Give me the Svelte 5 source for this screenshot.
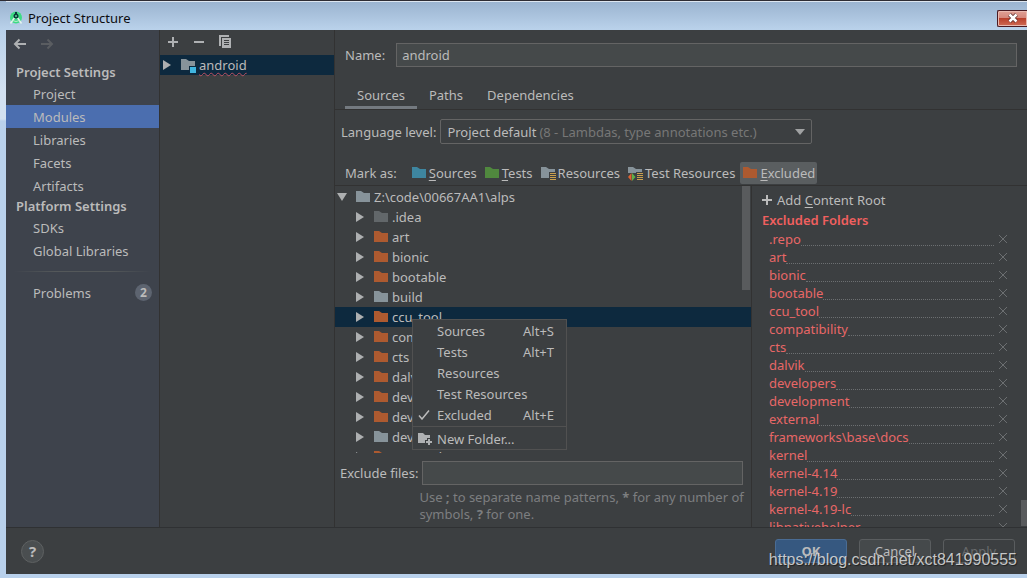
<script lang="ts">
	type Mark = 'source' | 'test' | 'plain' | 'excluded' | 'hidden';

	const projectItems = ['Project', 'Modules', 'Libraries', 'Facets', 'Artifacts'];
	const platformItems = ['SDKs', 'Global Libraries'];
	const tabs = ['Sources', 'Paths', 'Dependencies'];

	const marks = [
		{ key: 'S', rest: 'ources', icon: 'source' },
		{ key: 'T', rest: 'ests', icon: 'test' },
		{ key: '', rest: 'Resources', icon: 'plain', badge: 'resources' },
		{ key: '', rest: 'Test Resources', icon: 'plain', badge: 'test-resources' },
		{ key: 'E', rest: 'xcluded', icon: 'excluded' }
	];

	const folders: { name: string; mark: Mark }[] = [
		{ name: '.idea', mark: 'hidden' },
		{ name: 'art', mark: 'excluded' },
		{ name: 'bionic', mark: 'excluded' },
		{ name: 'bootable', mark: 'excluded' },
		{ name: 'build', mark: 'plain' },
		{ name: 'ccu_tool', mark: 'excluded' },
		{ name: 'compatibility', mark: 'excluded' },
		{ name: 'cts', mark: 'excluded' },
		{ name: 'dalvik', mark: 'excluded' },
		{ name: 'developers', mark: 'excluded' },
		{ name: 'development', mark: 'excluded' },
		{ name: 'device', mark: 'plain' },
		{ name: 'external', mark: 'excluded' }
	];

	const menu = [
		{ label: 'Sources', shortcut: 'Alt+S' },
		{ label: 'Tests', shortcut: 'Alt+T' },
		{ label: 'Resources', shortcut: '' },
		{ label: 'Test Resources', shortcut: '' },
		{ label: 'Excluded', shortcut: 'Alt+E' }
	];

	let section = $state('Modules');
	let tab = $state('Sources');
	let folder = $state('ccu_tool');
	let checked = $state('Excluded');
	let name = $state('android');
	let excludeFiles = $state('');
	let excluded = $state([
		'.repo',
		'art',
		'bionic',
		'bootable',
		'ccu_tool',
		'compatibility',
		'cts',
		'dalvik',
		'developers',
		'development',
		'external',
		'frameworks\\base\\docs',
		'kernel',
		'kernel-4.14',
		'kernel-4.19',
		'kernel-4.19-lc',
		'libnativehelper'
	]);

	function removeExcluded(path: string) {
		excluded = excluded.filter((p) => p !== path);
	}
</script>

{#snippet folderIcon(kind: string, badge = '')}
	<svg class="folder {kind}" width="15" height="16" viewBox="0 -2 15 16" aria-hidden="true">
		<path class="shape" d="M0 0h5l3 2h6v9H0z" />
		{#if badge === 'resources' || badge === 'test-resources'}
			<rect class="cut" x="8" y="5" width="7" height="9" />
			<path d="M9 6.5h6M9 8.5h6M9 10.5h6M9 12.5h6" stroke="#c9a04e" />
		{/if}
		{#if badge === 'test-resources'}
			<path class="cut" d="M0 6h8v8H0z" />
			<path d="M3.500 6v8L0 10z" fill="#e0622f" />
			<path d="M4 6v8l3.500-4z" fill="#5faf48" />
		{/if}
		{#if badge === 'module'}
			<rect class="cut" x="8" y="7" width="7" height="7" />
			<rect x="9" y="8" width="6" height="6" fill="#40b6e0" />
		{/if}
	</svg>
{/snippet}

{#snippet arrow(open = false)}
	<svg class="arrow" width="10" height="10" viewBox="0 0 10 10" aria-hidden="true">
		<path d={open ? 'M0 1h10L5 9z' : 'M1 0l8 5-8 5z'} fill="#adafb0" />
	</svg>
{/snippet}

{#snippet navItem(label: string)}
	<a href="#{label}" class="nav-item" class:active={section === label} onclick={() => (section = label)}>
		{label}
	</a>
{/snippet}

<div class="window">
	<header class="titlebar">
		<svg width="14" height="14" viewBox="0 0 14 14" aria-hidden="true">
			<circle cx="7" cy="6.500" r="6" fill="#3ddc84" />
			<path d="M1.500 12.500L6 6h2l4.500 6.500" fill="none" stroke="#e6f5ee" stroke-width="1.500" />
			<path d="M3.500 9.500q3.500 2 7 0" fill="none" stroke="#bfe8d2" />
			<circle cx="7" cy="5" r="2.500" fill="#0b3b3a" />
			<circle cx="7" cy="5" r="1" fill="#5fd79a" />
			<path d="M7 1v2" stroke="#0b3b3a" stroke-width="2" />
		</svg>
		<span class="title">Project Structure</span>
		<button class="close" aria-label="Close">
			<svg width="12" height="10" viewBox="0 0 12 10" aria-hidden="true">
				<path d="M2.500 1.500l7 7M9.500 1.500l-7 7" stroke="#5b2a2a" stroke-width="4" />
				<path d="M2.500 1.500l7 7M9.500 1.500l-7 7" stroke="#fff" stroke-width="2.500" />
			</svg>
		</button>
	</header>

	<div class="content">
		<div class="columns">
			<nav class="sidebar">
				<div class="history">
					<button aria-label="Back">
						<svg width="14" height="12" viewBox="0 0 14 12" aria-hidden="true">
							<path d="M13 6H2M6.500 1.500L2 6l4.500 4.500" fill="none" stroke="#afb1b3" stroke-width="2" />
						</svg>
					</button>
					<button aria-label="Forward" disabled>
						<svg width="14" height="12" viewBox="0 0 14 12" aria-hidden="true">
							<path d="M1 6h11M7.500 1.500L12 6l-4.500 4.500" fill="none" stroke="#5a5d61" stroke-width="2" />
						</svg>
					</button>
				</div>
				<h2>Project Settings</h2>
				{#each projectItems as item}
					{@render navItem(item)}
				{/each}
				<h2>Platform Settings</h2>
				{#each platformItems as item}
					{@render navItem(item)}
				{/each}
				<hr />
				<a href="#Problems" class="nav-item">
					Problems <span class="count">2</span>
				</a>
			</nav>

			<section class="modules">
				<div class="toolbar">
					<button aria-label="Add">
						<svg width="12" height="12" viewBox="0 0 12 12" aria-hidden="true">
							<path d="M6 1v10M1 6h10" stroke="#afb1b3" stroke-width="2" />
						</svg>
					</button>
					<button aria-label="Remove">
						<svg width="12" height="12" viewBox="0 0 12 12" aria-hidden="true">
							<path d="M1 6h10" stroke="#afb1b3" stroke-width="2" />
						</svg>
					</button>
					<button aria-label="Copy">
						<svg width="12" height="13" viewBox="0 0 12 13" aria-hidden="true">
							<path d="M0 0h10v2H2v9H0z" fill="#afb1b3" />
							<path d="M3 3h9v10H3z" fill="#afb1b3" />
							<path d="M5 5.500h5M5 7.500h5M5 9.500h5" stroke="#3c3f41" />
						</svg>
					</button>
				</div>
				<div class="module-row">
					{@render arrow()}
					{@render folderIcon('plain', 'module')}
					<span class="misspelt">android</span>
				</div>
			</section>

			<main>
				<div class="name-row">
					<label for="name">Name:</label>
					<input id="name" type="text" bind:value={name} />
				</div>

				<div class="tabs" role="tablist">
					{#each tabs as t}
						<button role="tab" aria-selected={tab === t} class:active={tab === t} onclick={() => (tab = t)}>{t}</button>
					{/each}
				</div>

				<div class="level-row">
					<label for="level">Language level:</label>
					<div class="select">
						<select id="level">
							<option>Project default</option>
						</select>
						<span class="hint">(8 - Lambdas, type annotations etc.)</span>
						<svg width="10" height="6" viewBox="0 0 10 6" aria-hidden="true">
							<path d="M0 0h10L5 6z" fill="#a0a2a3" />
						</svg>
					</div>
				</div>

				<div class="mark-row">
					<span class="mark-label">Mark as:</span>
					{#each marks as m}
						<button class:active={m.key + m.rest === checked}>
							{@render folderIcon(m.icon, m.badge)}
							<span><u>{m.key}</u>{m.rest}</span>
						</button>
					{/each}
				</div>

				<div class="panes">
					<div class="roots">
						<div class="tree" role="tree">
							<div class="tree-row root" role="treeitem" aria-selected="false" aria-expanded="true">
								{@render arrow(true)}
								{@render folderIcon('plain')}
								<span>Z:\code\00667AA1\alps</span>
							</div>
							{#each folders as f}
								<div class="tree-row" class:active={folder === f.name} role="treeitem" aria-selected={folder === f.name}>
									{@render arrow()}
									{@render folderIcon(f.mark)}
									<span>{f.name}</span>
								</div>
							{/each}
							<div class="scroll-thumb"></div>
						</div>

						<div class="exclude">
							<label for="exclude">Exclude files:</label>
							<input id="exclude" type="text" bind:value={excludeFiles} />
							<p>Use <b>;</b> to separate name patterns, <b>*</b> for any number of symbols, <b>?</b> for one.</p>
						</div>

						<div class="menu" role="menu">
							{#each menu as item}
								<button role="menuitem" onclick={() => (checked = item.label)}>
									<span class="menu-icon">
										{#if checked === item.label}
											<svg width="12" height="10" viewBox="0 0 12 10" aria-hidden="true">
												<path d="M1 5.500L4 9l7-8.500" fill="none" stroke="#bbb" stroke-width="1.500" />
											</svg>
										{/if}
									</span>
									<span>{item.label}</span>
									<kbd>{item.shortcut}</kbd>
								</button>
							{/each}
							<hr />
							<button role="menuitem">
								<span class="menu-icon">
									<svg width="15" height="13" viewBox="0 0 15 13" aria-hidden="true">
										<path d="M0 1h5l2 2h5v3H9v2H7v3H0z" fill="#afb1b3" />
										<path d="M11 7v6M8 10h6" stroke="#afb1b3" stroke-width="2" />
									</svg>
								</span>
								<span>New Folder...</span>
							</button>
						</div>
					</div>

					<aside>
						<button class="add-root">
							<svg width="10" height="10" viewBox="0 0 10 10" aria-hidden="true">
								<path d="M5 0v10M0 5h10" stroke="#bbb" stroke-width="2" />
							</svg>
							<span>Add <u>C</u>ontent Root</span>
						</button>
						<h3>Excluded Folders</h3>
						<ul>
							{#each excluded as path}
								<li>
									<span>{path}</span>
									<i class="leader"></i>
									<button aria-label="Remove {path}" onclick={() => removeExcluded(path)}>
										<svg width="8" height="8" viewBox="0 0 8 8" aria-hidden="true">
											<path d="M0 0l8 8M8 0L0 8" stroke="#6c6f71" />
										</svg>
									</button>
								</li>
							{/each}
						</ul>
						<div class="scroll-thumb low"></div>
					</aside>
				</div>
			</main>
		</div>

		<footer>
			<button class="help" aria-label="Help">?</button>
			<button class="action primary">OK</button>
			<button class="action">Cancel</button>
			<button class="action" disabled>Apply</button>
		</footer>
	</div>
	<span class="watermark">https://blog.csdn.net/xct841990555</span>
</div>

<style>
	:global(body) {
		margin: 0;
	}

	.window {
		position: relative;
		box-sizing: border-box;
		height: 100vh;
		display: flex;
		flex-direction: column;
		padding: 0 0 4px 6px;
		border-top: 1px solid #2e2c33;
		background: linear-gradient(#9ab3cf 0, #b9d1ea 28px, #d3e1f1 90px, #d3e1f1 118px, #b9d1ec 120px);
		color: #bbb;
		font: 13px/18px 'Noto Sans', 'Open Sans', sans-serif;
		overflow: hidden;
	}

	.window * {
		box-sizing: border-box;
	}

	button {
		padding: 0;
		border: 0;
		background: none;
		color: inherit;
		font: inherit;
		display: flex;
		align-items: center;
	}

	svg {
		flex: none;
		display: block;
	}

	input {
		min-width: 0;
		height: 24px;
		padding: 0 5px;
		border: 1px solid #646464;
		background: #45494a;
		color: #bbb;
		font: inherit;
		outline: none;
	}

	.titlebar {
		flex: none;
		height: 29px;
		display: flex;
		align-items: center;
		gap: 5px;
		padding: 4px 0 0 3px;
		border-top: 1px solid #dde6f0;
		color: #0c0c10;
	}

	.close {
		margin-left: auto;
		width: 30px;
		height: 17px;
		justify-content: center;
		border: 1px solid #4a1a22;
		border-right: 0;
		border-radius: 2px 0 0 2px;
		background: linear-gradient(#e0a095 0, #d5867a 48%, #b9402c 50%, #cf6b55 100%);
		box-shadow: inset 0 0 0 1px #e9b9b0;
	}

	.content {
		flex: 1;
		min-height: 0;
		display: flex;
		flex-direction: column;
		background: #3c3f41;
	}

	.columns {
		flex: 1;
		min-height: 0;
		display: grid;
		grid-template-columns: 154px 175px minmax(0, 1fr);
	}

	.sidebar {
		background: #3e434c;
		border-right: 1px solid #323232;
	}

	.history {
		display: flex;
		gap: 13px;
		height: 32px;
		padding: 0 0 4px 7px;
	}

	.sidebar h2 {
		margin: 0;
		padding-left: 10px;
		font-size: 13px;
		font-weight: 600;
		line-height: 19px;
	}

	.nav-item {
		display: flex;
		align-items: center;
		height: 23px;
		padding: 0 7px 0 27px;
		color: inherit;
		text-decoration: none;
	}

	.nav-item.active {
		background: #4b6eaf;
	}

	.sidebar h2:first-of-type {
		padding-top: 1px;
	}

	.sidebar hr {
		height: 1px;
		margin: 9px 8px;
		border: 0;
		background: linear-gradient(90deg, transparent, #54585a 30%, #54585a 70%, transparent);
	}

	.count {
		width: 17px;
		height: 17px;
		margin-left: auto;
		border-radius: 50%;
		background: #5d6470;
		font-size: 12px;
		font-weight: bold;
		line-height: 17px;
		text-align: center;
	}

	.modules {
		border-right: 1px solid #323232;
	}

	.toolbar {
		display: flex;
		gap: 14px;
		height: 25px;
		padding: 0 0 2px 7px;
	}

	.module-row {
		display: flex;
		align-items: center;
		height: 20px;
		padding-left: 2px;
		background: #0d293e;
	}

	.module-row .folder {
		margin: 0 3px 0 9px;
	}

	.misspelt {
		text-decoration: underline wavy #bc5062 1px;
		text-decoration-skip-ink: none;
		text-underline-offset: 2px;
	}

	.folder .shape {
		fill: #87939a;
	}

	.folder.source .shape {
		fill: #3e86a0;
	}

	.folder.test .shape {
		fill: #50883e;
	}

	.folder.excluded .shape {
		fill: #ad5a30;
	}

	.folder.hidden .shape {
		fill: #62676a;
	}

	.cut {
		fill: #3c3f41;
	}

	.module-row .cut {
		fill: #0d293e;
	}

	main {
		display: flex;
		flex-direction: column;
		min-height: 0;
	}

	.name-row {
		display: flex;
		align-items: center;
		gap: 11px;
		padding: 13px 10px 0;
	}

	.name-row input {
		flex: 1;
	}

	.tabs {
		display: flex;
		margin-top: 16px;
		padding-left: 10px;
		border-bottom: 1px solid #323232;
	}

	.tabs button {
		height: 26px;
		padding: 0 12px;
		border-bottom: 3px solid transparent;
	}

	.tabs .active {
		border-bottom-color: #747a80;
	}

	.level-row {
		display: flex;
		align-items: center;
		gap: 4px;
		padding: 9px 6px 0;
	}

	.select {
		display: grid;
		align-items: center;
		flex: 0 1 372px;
	}

	.select > * {
		grid-area: 1 / 1;
	}

	.select select {
		height: 25px;
		padding: 0 6px;
		border: 1px solid #646464;
		border-radius: 2px;
		appearance: none;
		background: #3c3f41;
		color: #bbb;
		font: inherit;
	}

	.hint {
		padding-left: 99px;
		color: #777;
		pointer-events: none;
	}

	.select svg {
		justify-self: end;
		margin-right: 7px;
		pointer-events: none;
	}

	.mark-row {
		display: flex;
		align-items: center;
		gap: 3px;
		padding: 18px 10px 1px;
		white-space: nowrap;
		border-bottom: 1px solid #323232;
	}

	.mark-label {
		margin-right: 9px;
	}

	.mark-row button {
		gap: 2px;
		height: 22px;
		padding: 0 2px 0 3px;
		border-radius: 2px;
	}

	.mark-row .active {
		background: #5a5e60;
	}

	u {
		text-underline-offset: 2px;
	}

	.panes {
		flex: 1;
		min-height: 0;
		display: grid;
		grid-template-columns: minmax(0, 1fr) 276px;
	}

	.roots {
		position: relative;
		display: flex;
		flex-direction: column;
		min-height: 0;
	}

	.tree {
		position: relative;
		flex: 1;
		min-height: 0;
		padding-top: 1px;
		overflow: hidden;
	}

	.tree-row {
		display: flex;
		align-items: center;
		height: 20px;
		padding-left: 20px;
	}

	.tree-row.root {
		padding-left: 2px;
	}

	.tree-row.active {
		background: #0d293e;
	}

	.tree-row .folder {
		margin: 0 3px 0 9px;
	}

	.scroll-thumb {
		position: absolute;
		top: 0;
		right: 1px;
		width: 8px;
		height: 104px;
		background: #595b5d;
	}

	.scroll-thumb.low {
		top: auto;
		right: 0;
		bottom: 1px;
		width: 6px;
		height: 26px;
	}

	.exclude {
		display: grid;
		grid-template-columns: auto minmax(0, 1fr);
		align-items: center;
		column-gap: 4px;
		padding: 8px 8px 4px 5px;
	}

	.exclude p {
		grid-column: 2;
		margin: 4px -8px 0 -3px;
		color: #7c7e80;
		line-height: 17px;
	}

	.menu {
		position: absolute;
		top: 133px;
		left: 77px;
		width: 155px;
		border: 1px solid #515151;
		background: #3c3f41;
	}

	.menu button {
		width: 100%;
		height: 21px;
		padding-right: 12px;
	}

	.menu-icon {
		width: 24px;
		padding-left: 5px;
	}

	.menu kbd {
		margin-left: auto;
		font: inherit;
	}

	.menu hr {
		margin: 1px 0;
		border: 0;
		border-top: 1px solid #515151;
	}

	aside {
		position: relative;
		min-height: 0;
		padding: 4px 20px 0 10px;
		border-left: 1px solid #323232;
		overflow: hidden;
	}

	.add-root {
		gap: 5px;
		height: 20px;
	}

	h3 {
		margin: 0;
		color: #f0605f;
		font-size: 13px;
		font-weight: 600;
		line-height: 20px;
	}

	ul {
		margin: 0;
		padding: 0 0 0 7px;
		list-style: none;
	}

	li {
		display: flex;
		align-items: center;
		height: 18px;
		color: #e86767;
	}

	.leader {
		flex: 1;
		height: 14px;
		margin-right: 5px;
		border-bottom: 1px dotted #6c6f71;
	}

	footer {
		flex: none;
		height: 47px;
		display: flex;
		align-items: center;
		gap: 12px;
		padding: 0 12px 0 15px;
		border-top: 1px solid #2f3133;
	}

	.help {
		width: 23px;
		height: 23px;
		margin-right: auto;
		justify-content: center;
		border: 1px solid #5e6162;
		border-radius: 50%;
		background: #4a4e50;
		font-size: 15px;
		font-weight: bold;
	}

	.action {
		width: 72px;
		height: 24px;
		justify-content: center;
		border: 1px solid #5a5d5f;
		border-radius: 3px;
		background: #45494b;
	}

	.action.primary {
		border-color: #4a6c94;
		background: #365880;
		font-weight: bold;
	}

	.action:disabled {
		background: none;
		color: #696b6d;
	}

	.watermark {
		position: absolute;
		right: 10px;
		bottom: 8px;
		color: rgba(225, 225, 225, 0.85);
		font: 16px/20px 'Liberation Sans', Arial, sans-serif;
		text-shadow: 1px 1px 1px rgba(0, 0, 0, 0.5);
		pointer-events: none;
	}
</style>
